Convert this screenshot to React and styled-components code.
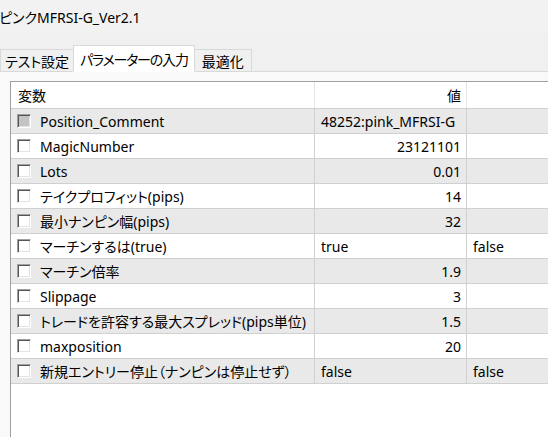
import React from 'react'
import styled, { createGlobalStyle } from 'styled-components'

const GlobalStyle = createGlobalStyle`
  html, body {
    margin: 0;
    padding: 0;
    background: #f0f0f0;
    overflow: hidden;
  }
  body {
    font-family: "Noto Sans", "Noto Sans CJK JP", sans-serif;
    font-size: 14px;
    font-feature-settings: "palt";
    color: #000;
  }
`

const Window = styled.div`
  width: 548px;
  height: 437px;
  display: flex;
  flex-direction: column;
  background: #f0f0f0;
`

const TitleBar = styled.div`
  height: 33px;
  display: flex;
  align-items: center;
  text-indent: -1px;
  font-size: 14px;
  background: #f2f2f2;
`

const TabBar = styled.div`
  display: flex;
  align-items: flex-end;
  height: 38px;
  border-bottom: 1px solid #d9d9d9;
`

const Tab = styled.div`
  height: ${p => (p.active ? '27px' : '23px')};
  padding: 0 ${p => p.pad || 4}px;
  margin-bottom: -1px;
  display: flex;
  align-items: center;
  box-sizing: border-box;
  letter-spacing: ${p => (p.active ? '-1.2px' : '0')};
  background: ${p => (p.active ? '#ffffff' : '#f0f0f0')};
  border: 1px solid #d9d9d9;
  border-bottom: ${p => (p.active ? '1px solid #ffffff' : '1px solid #d9d9d9')};
  margin-left: ${p => (p.active ? '-1px' : '0')};
  margin-right: ${p => (p.active ? '-1px' : '0')};
  position: relative;
  z-index: ${p => (p.active ? 1 : 0)};
`

const Panel = styled.div`
  flex: 1;
  background: #f9f9f9;
  padding: 9px 0 0 10px;
  display: flex;
`

const Grid = styled.div`
  flex: 1;
  background: #ffffff;
  border-left: 1px solid #a0a0a0;
  border-top: 1px solid #a0a0a0;
`

const Row = styled.div`
  display: grid;
  grid-template-columns: 304px 152px 1fr;
  height: ${p => (p.header ? '26px' : '24px')};
  border-bottom: 1px solid #d0d0d0;
  background: ${p => (p.shade ? '#e9e9e9' : '#ffffff')};
`

const Cell = styled.div`
  display: flex;
  align-items: center;
  justify-content: ${p => (p.right ? 'flex-end' : 'flex-start')};
  padding: ${p => (p.right ? '0 5px 0 0' : '0 0 0 6px')};
  border-right: 1px solid ${p => (p.header ? '#e5e5e5' : '#d0d0d0')};
  white-space: nowrap;
  overflow: hidden;
`

const NameCell = styled(Cell)`
  padding-left: 6px;
  gap: 9px;
`

const HeaderName = styled(Cell)`
  padding-left: 7px;
`

const LastCell = styled(Cell)`
  border-right: none;
`

const Check = styled.span`
  width: 14px;
  height: 14px;
  box-sizing: border-box;
  flex: none;
  border-top: 1px solid #a0a0a0;
  border-left: 1px solid #a0a0a0;
  border-right: 1px solid #ffffff;
  border-bottom: 1px solid #ffffff;
  box-shadow: inset 1px 1px 0 #555555, inset -1px -1px 0 #e3e3e3;
  background: ${p => (p.disabled ? '#c4c4c4' : '#ffffff')};
`

const params = [
  { name: 'Position_Comment', value: '48252:pink_MFRSI-G', align: 'left', disabled: true },
  { name: 'MagicNumber', value: '23121101' },
  { name: 'Lots', value: '0.01' },
  { name: 'テイクプロフィット(pips)', value: '14' },
  { name: '最小ナンピン幅(pips)', value: '32' },
  { name: 'マーチンするは(true)', value: 'true', align: 'left', extra: 'false' },
  { name: 'マーチン倍率', value: '1.9' },
  { name: 'Slippage', value: '3' },
  { name: 'トレードを許容する最大スプレッド(pips単位)', value: '1.5' },
  { name: 'maxposition', value: '20' },
  { name: '新規エントリー停止（ナンピンは停止せず）', value: 'false', align: 'left', extra: 'false' },
]

export default function App() {
  return (
    <Window>
      <GlobalStyle />
      <TitleBar>ピンクMFRSI-G_Ver2.1</TitleBar>
      <TabBar>
        <Tab>テスト設定</Tab>
        <Tab active pad={6}>パラメーターの入力</Tab>
        <Tab pad={7}>最適化</Tab>
      </TabBar>
      <Panel>
        <Grid>
          <Row header>
            <HeaderName header>変数</HeaderName>
            <Cell header right>値</Cell>
            <LastCell header />
          </Row>
          {params.map((p, i) => (
            <Row key={p.name} shade={i % 2 === 0}>
              <NameCell>
                <Check disabled={p.disabled} />
                {p.name}
              </NameCell>
              <Cell right={p.align !== 'left'}>{p.value}</Cell>
              <LastCell>{p.extra || ''}</LastCell>
            </Row>
          ))}
        </Grid>
      </Panel>
    </Window>
  )
}
